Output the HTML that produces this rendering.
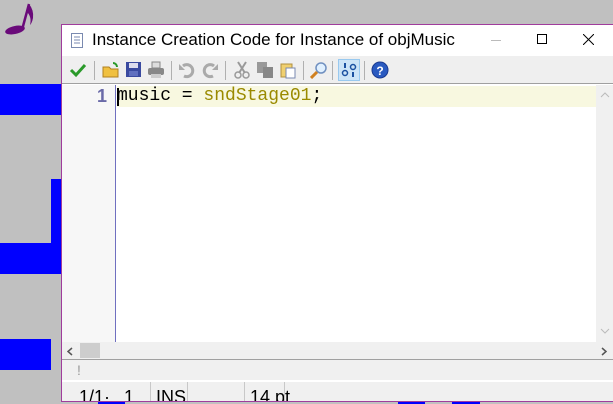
<!DOCTYPE html>
<html><head><meta charset="utf-8"><style>
*{margin:0;padding:0;box-sizing:border-box}
body{width:613px;height:404px;background:#c0c0c0;position:relative;overflow:hidden;font-family:"Liberation Sans",sans-serif}
.b{position:absolute;background:#0000ff}
.win{position:absolute;left:61px;top:24px;width:560px;height:378px;border:1px solid #a03c9c;background:#fff;overflow:hidden}
.title{position:absolute;left:0;top:0;width:100%;height:31px;background:#fff}
.title span{position:absolute;left:30px;top:5px;font-size:17px;color:#000}
.tb{position:absolute;left:0;top:31px;width:100%;height:28px;background:#efefef;border-bottom:1px solid #a0a0a0}
.ic{position:absolute;top:5px;width:18px;height:18px}
.sep{position:absolute;top:5px;width:1px;height:19px;background:#b0b0b0}
.ed{position:absolute;left:0;top:60px;width:535px;height:257px;background:#fff}
.gut{position:absolute;left:0;top:60px;width:54px;height:257px;background:#f7f7f7;border-right:1px solid #7070c0}
.hl{position:absolute;left:55px;top:61px;width:479px;height:21px;background:#f8f8e0}
.code{position:absolute;left:55px;top:61px;font-family:"Liberation Mono",monospace;font-size:18px;color:#000;white-space:pre}
.vs{position:absolute;left:534px;top:60px;width:18px;height:257px;background:#f0f0f0}
.hs{position:absolute;left:0;top:317px;width:552px;height:17px;background:#f0f0f0}
.st1{position:absolute;left:0;top:334px;width:552px;height:22px;background:#f0f0f0;border-top:1px solid #a0a0a0;border-bottom:1px solid #fff}
.st2{position:absolute;left:0;top:357px;width:552px;height:21px;background:#f0f0f0;font-size:18px}
.st2 span{position:absolute;top:5px}
</style></head><body>
<div class="b" style="left:0;top:84px;width:61px;height:31px"></div>
<div class="b" style="left:51px;top:179px;width:10px;height:64px"></div>
<div class="b" style="left:0;top:243px;width:61px;height:31px"></div>
<div class="b" style="left:0;top:339px;width:51px;height:31px"></div>
<svg style="position:absolute;left:0;top:0" width="40" height="40"><ellipse cx="15" cy="30" rx="10" ry="4" transform="rotate(-12 15 30)" fill="#6a0a7a"/><path d="M22 30 L29 4" stroke="#6a0a7a" stroke-width="2.5"/><path d="M29 4 Q34 10 33 18 Q32 23 30 25 Q32 17 27 12Z" fill="#6a0a7a"/></svg>
<div class="win">
 <div class="title">
  <svg style="position:absolute;left:9px;top:8px" width="12" height="15"><rect x="0.5" y="0.5" width="11" height="14" fill="#fff" stroke="#7a8ab0"/><path d="M3 4h6M3 7h6M3 10h6" stroke="#7a8ab0"/></svg>
  <span>Instance Creation Code for Instance of objMusic</span>
  <div style="position:absolute;left:429px;top:15px;width:10px;height:1px;background:#bbb"></div>
  <div style="position:absolute;left:475px;top:9px;width:10px;height:10px;border:1px solid #000"></div>
  <svg style="position:absolute;left:521px;top:9px" width="11" height="11"><path d="M0 0L11 11M11 0L0 11" stroke="#000"/></svg>
 </div>
 <div class="tb">
  <svg class="ic" style="left:7px" width="18" height="18"><path d="M2 9l5 5 9-10" stroke="#2a9a2a" stroke-width="3" fill="none"/></svg>
  <div class="sep" style="left:32px"></div>
  <svg class="ic" style="left:40px" width="18" height="18"><path d="M1 6h6l2 2h7v8H1z" fill="#f0c040" stroke="#b08020"/><path d="M11 2a4 4 0 0 1 4 4" stroke="#2a9a2a" stroke-width="2" fill="none"/></svg>
  <svg class="ic" style="left:63px" width="18" height="18"><rect x="1" y="1" width="15" height="15" fill="#3a4aa0"/><rect x="4" y="2" width="9" height="5" fill="#dde"/><rect x="4" y="10" width="9" height="5" fill="#6070c0"/></svg>
  <svg class="ic" style="left:85px" width="18" height="18"><rect x="5" y="1" width="8" height="6" fill="#ddd" stroke="#888"/><rect x="1" y="7" width="16" height="7" rx="2" fill="#888"/><rect x="4" y="13" width="10" height="4" fill="#ccc"/></svg>
  <div class="sep" style="left:109px"></div>
  <svg class="ic" style="left:116px" width="18" height="18"><path d="M5 5a6 6 0 1 1 1 10" stroke="#aaa" stroke-width="3" fill="none"/><path d="M1 3v6h6z" fill="#aaa"/></svg>
  <svg class="ic" style="left:139px" width="18" height="18"><path d="M13 5a6 6 0 1 0-1 10" stroke="#aaa" stroke-width="3" fill="none"/><path d="M17 3v6h-6z" fill="#aaa"/></svg>
  <div class="sep" style="left:163px"></div>
  <svg class="ic" style="left:171px" width="18" height="18"><path d="M5 1l7 11M13 1L6 12" stroke="#999" stroke-width="2"/><circle cx="5" cy="14" r="3" fill="none" stroke="#999" stroke-width="1.5"/><circle cx="13" cy="14" r="3" fill="none" stroke="#999" stroke-width="1.5"/></svg>
  <svg class="ic" style="left:194px" width="18" height="18"><rect x="1" y="1" width="10" height="11" fill="#999"/><rect x="7" y="6" width="10" height="11" fill="#888"/></svg>
  <svg class="ic" style="left:217px" width="18" height="18"><rect x="2" y="3" width="11" height="13" fill="#f0d070" stroke="#b09040"/><rect x="7" y="7" width="9" height="10" fill="#fff" stroke="#7a8ab0"/></svg>
  <div class="sep" style="left:241px"></div>
  <svg class="ic" style="left:248px" width="18" height="18"><circle cx="11" cy="7" r="5" fill="#e0f0ff" stroke="#7090c0" stroke-width="1.5"/><path d="M7 11l-6 6" stroke="#d08020" stroke-width="3"/></svg>
  <div class="sep" style="left:270px"></div>
  <div style="position:absolute;left:276px;top:3px;width:22px;height:22px;background:#cce4f7;border:1px solid #99c9ef"></div>
  <svg class="ic" style="left:278px" width="18" height="18"><path d="M5 2v5M13 11v5" stroke="#1a50a0" stroke-width="2"/><circle cx="5" cy="12" r="2.5" fill="none" stroke="#1a50a0" stroke-width="1.5"/><circle cx="13" cy="6" r="2.5" fill="none" stroke="#1a50a0" stroke-width="1.5"/></svg>
  <div class="sep" style="left:302px"></div>
  <svg class="ic" style="left:309px" width="18" height="18"><circle cx="9" cy="9" r="8" fill="#2a5ac0" stroke="#1a3a90"/><text x="9" y="14" font-size="12" font-weight="bold" fill="#fff" text-anchor="middle" font-family="Liberation Sans">?</text></svg>
 </div>
 <div class="ed"></div>
 <div class="gut"></div>
 <div class="hl"></div>
 <div style="position:absolute;left:35px;top:61px;font-size:18px;font-weight:bold;color:#6a6aa8">1</div>
 <div style="position:absolute;left:55px;top:63px;width:2px;height:18px;background:#000"></div>
 <div class="code">music = <span style="color:#9a8a00">sndStage01</span>;</div>
 <div class="vs"><svg style="position:absolute;left:4px;top:7px" width="10" height="6"><path d="M1 5l4-4 4 4" stroke="#bbb" fill="none"/></svg><svg style="position:absolute;left:4px;top:243px" width="10" height="6"><path d="M1 1l4 4 4-4" stroke="#bbb" fill="none"/></svg></div>
 <div class="hs"><svg style="position:absolute;left:5px;top:5px" width="6" height="9"><path d="M5 1L1 4.5 5 8" stroke="#555" stroke-width="1.5" fill="none"/></svg><div style="position:absolute;left:18px;top:1px;width:20px;height:15px;background:#cdcdcd"></div><svg style="position:absolute;left:539px;top:5px" width="6" height="9"><path d="M1 1l4 3.5L1 8" stroke="#555" stroke-width="1.5" fill="none"/></svg></div>
 <div class="st1"><span style="position:absolute;left:15px;top:2px;font-size:14px;color:#999">!</span></div>
 <div class="st2">
  <span style="left:17px">1/1·</span>
  <span style="left:62px">1</span>
  <div style="position:absolute;left:88px;top:0;width:1px;height:21px;background:#c8c8c8"></div>
  <span style="left:94px">INS</span>
  <div style="position:absolute;left:125px;top:0;width:1px;height:21px;background:#c8c8c8"></div>
  <div style="position:absolute;left:182px;top:0;width:1px;height:21px;background:#c8c8c8"></div>
  <span style="left:188px">14 pt</span>
  <div style="position:absolute;left:222px;top:0;width:1px;height:21px;background:#c8c8c8"></div>
 </div>
</div>
<div class="b" style="left:98px;top:402px;width:27px;height:2px"></div>
<div class="b" style="left:398px;top:402px;width:27px;height:2px"></div>
<div class="b" style="left:452px;top:402px;width:28px;height:2px"></div>
</body></html>
